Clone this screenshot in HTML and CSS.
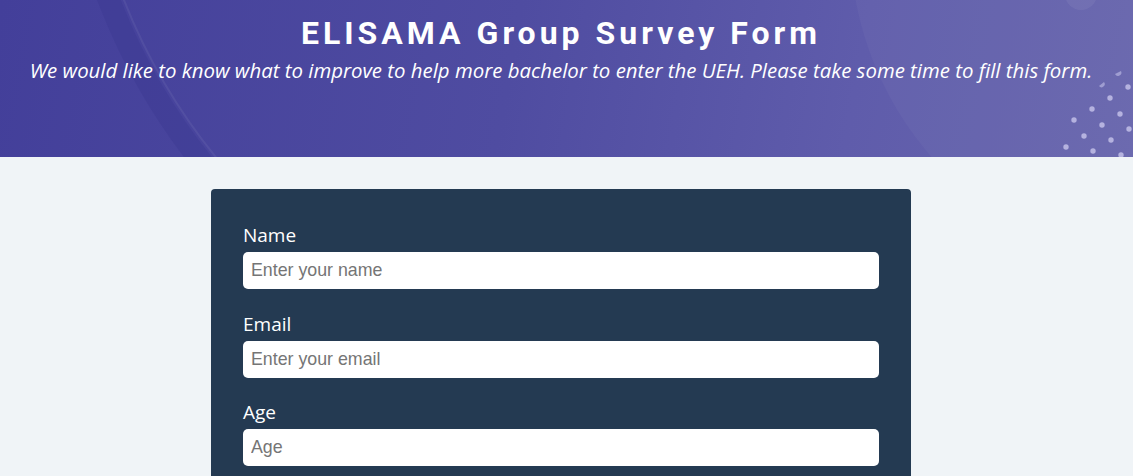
FILE: index.html
```html
<!DOCTYPE html>
<html lang="en">
<head>
<meta charset="utf-8">
<title>ELISAMA Group Survey Form</title>
<link rel="stylesheet" href="styles.css">
</head>
<body>
<header class="hero">
  <svg class="hero-deco" width="1133" height="157" viewBox="0 0 1133 157" aria-hidden="true">
    <circle cx="680" cy="-220" r="612" fill="none" stroke="#3a3790" stroke-opacity="0.35" stroke-width="22"/>
    <circle cx="680" cy="-220" r="598" fill="none" stroke="#ffffff" stroke-opacity="0.06" stroke-width="2"/>
    <circle cx="1180" cy="-60" r="330" fill="#ffffff" fill-opacity="0.03"/>
    <circle cx="1081" cy="-6" r="16" fill="#ffffff" fill-opacity="0.06"/>
    <g fill="#c2c0e8" fill-opacity="0.85">
      <circle cx="1128" cy="87" r="2.7"/><circle cx="1110" cy="98" r="2.7"/><circle cx="1092" cy="109" r="2.7"/><circle cx="1074" cy="120" r="2.7"/>
      <circle cx="1120" cy="114" r="2.7"/><circle cx="1102" cy="125" r="2.7"/><circle cx="1084" cy="136" r="2.7"/><circle cx="1066" cy="147" r="2.7"/>
      <circle cx="1129" cy="129" r="2.7"/><circle cx="1111" cy="140" r="2.7"/><circle cx="1093" cy="151" r="2.7"/>
      <circle cx="1121" cy="155" r="2.7"/>
    </g>
    <g fill="#c2c0e8" fill-opacity="0.6">
      <path d="M1115 74 a3 3 0 0 0 6 -3 z"/>
      <path d="M1099 86 a3 3 0 0 0 5 -4 z"/>
    </g>
  </svg>
  <h1 class="hero-title">ELISAMA Group Survey Form</h1>
  <p class="hero-desc">We would like to know what to improve to help more bachelor to enter the UEH. Please take some time to fill this form.</p>
</header>
<main class="page">
  <form class="survey">
    <div class="field">
      <label class="field-label" for="name">Name</label>
      <input class="field-input" id="name" type="text" placeholder="Enter your name">
    </div>
    <div class="field">
      <label class="field-label" for="email">Email</label>
      <input class="field-input" id="email" type="email" placeholder="Enter your email">
    </div>
    <div class="field">
      <label class="field-label" for="age">Age</label>
      <input class="field-input" id="age" type="number" placeholder="Age">
    </div>
  </form>
</main>
</body>
</html>
```
FILE: styles.css
```css
* { box-sizing: border-box; }

html, body {
  margin: 0;
  padding: 0;
}

body {
  background: #f0f4f7;
  font-family: "Open Sans", "Liberation Sans", sans-serif;
}

.hero {
  position: relative;
  height: 157px;
  overflow: hidden;
  background: linear-gradient(100deg, #433f9a 0%, #4f4ca1 45%, #5f5cab 75%, #6866ad 100%);
  color: #fff;
  text-align: center;
  padding: 14px 11px 0 0;
}

.hero-deco {
  position: absolute;
  left: 0;
  top: 0;
}

.hero-title {
  position: relative;
  margin: 0;
  font-family: Roboto, "Liberation Sans", sans-serif;
  font-weight: 700;
  font-size: 32px;
  line-height: 38px;
  letter-spacing: 4px;
}

.hero-desc {
  position: relative;
  margin: 4px 0 0;
  font-style: italic;
  font-size: 20.4px;
  line-height: 28px;
}

.page {
  padding: 32px 11px 32px 0;
}

.survey {
  width: 700px;
  margin: 0 auto;
  background: #243a52;
  border-radius: 4px;
  padding: 33px 32px 12px;
}

.field {
  margin-bottom: 21.5px;
}

.field-label {
  display: block;
  color: #fff;
  font-size: 19px;
  line-height: 27px;
  margin-bottom: 3px;
}

.field-input {
  display: block;
  width: 100%;
  height: 37px;
  border: 0;
  border-radius: 5px;
  background: #fff;
  padding: 0 8px;
  font-family: "Liberation Sans", Arial, sans-serif;
  font-size: 17.8px;
  color: #333;
}

.field-input::placeholder {
  color: #757575;
}
```
